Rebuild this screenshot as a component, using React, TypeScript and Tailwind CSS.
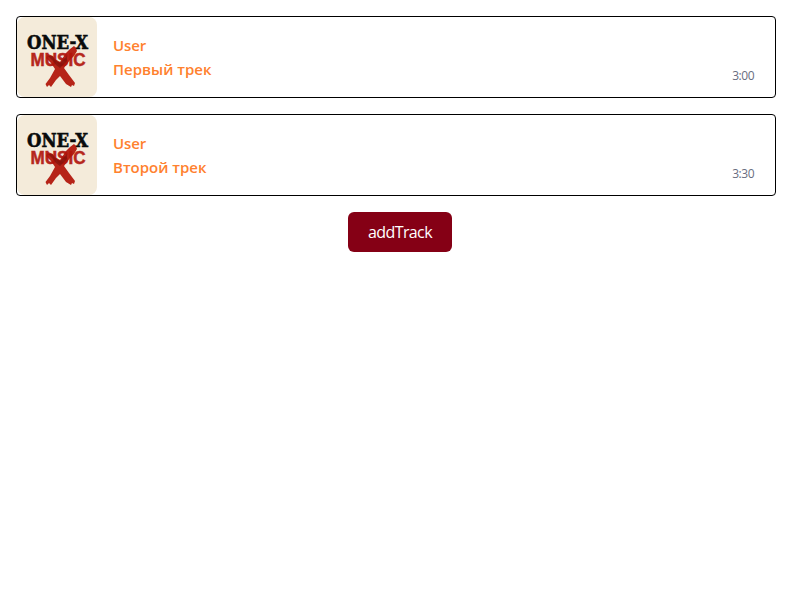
type Track = { title: string; author: string; duration: string };

const tracks: Track[] = [
  { title: "Первый трек", author: "User", duration: "3:00" },
  { title: "Второй трек", author: "User", duration: "3:30" },
];

function Cover() {
  return (
    <svg viewBox="0 0 80 80" className="block size-20 shrink-0 rounded-lg bg-[#f4ebda]" role="img">
      <text x="10" y="32" textLength="61" lengthAdjust="spacingAndGlyphs" fontSize="18.5" strokeWidth="0.6" className="fill-[#090b0b] stroke-[#090b0b] font-['DejaVu_Serif',serif] font-bold">
        ONE<tspan dy="-1.5">-</tspan><tspan dy="1.5">X</tspan>
      </text>
      <text x="13.5" y="48.5" textLength="55" lengthAdjust="spacingAndGlyphs" fontSize="17.5" strokeWidth="0.5" className="fill-[#b6271d] stroke-[#b6271d] font-['Liberation_Sans_Narrow','Liberation_Sans',sans-serif] font-bold">
        MUSIC
      </text>
      <path d="M53 32 L57 29 L59 31 L60 34 L57 39 L53 43 L47 51 L52 58 L58 66 L57 69 L55 68 L54 70 L49 67 L43 59 L39 63 L34 70 L32 68 L30 70 L28.5 67 L33 61 L38 52 L34 46 L29 41 L31 37 L36 39 L38 42 L43 45 L49 36Z" fill="#b01409" opacity="0.93" />
      <path d="M31 39 L35 39 L38 43 L43 46 L50 39 L50 44 L43 51 L39 48 L36 44Z" fill="#75130d" opacity="0.6" />
    </svg>
  );
}

function TrackCard({ track }: { track: Track }) {
  return (
    <article className="flex h-[82px] overflow-hidden rounded border border-black bg-white">
      <Cover />
      <div className="flex flex-1 items-center justify-between pr-[21px] pl-4">
        <div className="text-[15px] leading-6 font-semibold text-[#ff812e]">
          <p className="tracking-[-0.1px]">{track.author}</p>
          <p>{track.title}</p>
        </div>
        <span className="mt-[38px] text-xs tracking-[-0.5px] text-[#686d80]">{track.duration}</span>
      </div>
    </article>
  );
}

export default function App() {
  return (
    <main className="flex flex-col gap-4 py-4 pr-6 pl-4 font-['Open_Sans','Noto_Sans',sans-serif]">
      {tracks.map((track) => (
        <TrackCard key={track.title} track={track} />
      ))}
      <button className="ml-[332px] h-10 w-[104px] rounded-md bg-[#850015] text-base tracking-[-0.6px] text-white">addTrack</button>
    </main>
  );
}
